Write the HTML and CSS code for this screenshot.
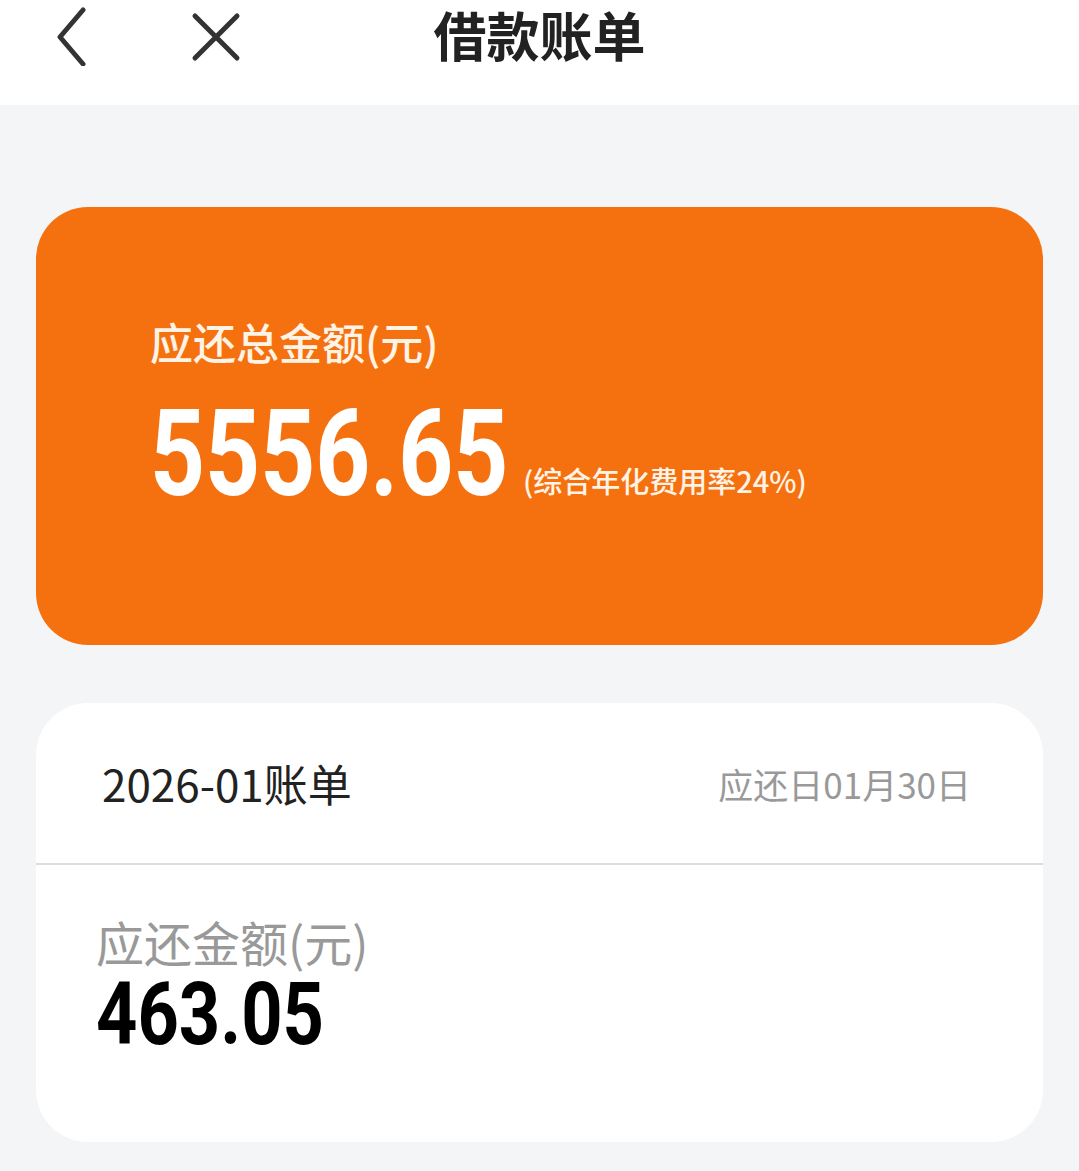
FILE: index.html
```html
<!DOCTYPE html>
<html lang="zh-CN">
<head>
  <meta charset="UTF-8">
  <title>借款账单</title>
  <link rel="stylesheet" href="styles.css">
</head>
<body>
  <div class="nav-bar">
    <div class="nav-icons">
      <svg class="nav-icon" width="40" height="60" viewBox="0 0 40 60">
        <path d="M31 4 L8 31 L31 58" fill="none" stroke="#333" stroke-width="5" stroke-linecap="round" stroke-linejoin="round"/>
      </svg>
      <svg class="nav-icon close" width="52" height="52" viewBox="0 0 52 52">
        <path d="M5 5 L47 47 M47 5 L5 47" fill="none" stroke="#333" stroke-width="5" stroke-linecap="round"/>
      </svg>
    </div>
    <div class="nav-title">借款账单</div>
  </div>

  <div class="content">
    <div class="total-card">
      <div class="total-label">应还总金额(元)</div>
      <div class="total-row">
        <span class="total-amount">5556.65</span>
        <span class="total-rate">(综合年化费用率24%)</span>
      </div>
    </div>

    <div class="bill-card">
      <div class="bill-head">
        <span class="bill-month">2026-01账单</span>
        <span class="bill-due">应还日01月30日</span>
      </div>
      <div class="bill-body">
        <div class="bill-label">应还金额(元)</div>
        <div class="bill-amount">463.05</div>
      </div>
    </div>
  </div>
</body>
</html>
```

FILE: styles.css
```css
body {
  margin: 0;
  background-color: #f4f5f7;
  font-family: "Noto Sans CJK SC", "Noto Sans", sans-serif;
  color: #222;
}
.nav-bar {
  position: relative;
  height: 105px;
  box-sizing: border-box;
  padding-top: 2px;
  background: #fff;
  display: flex;
  align-items: flex-start;
  justify-content: center;
}
.nav-icons {
  position: absolute;
  left: 52px;
  top: 6px;
  display: flex;
  align-items: center;
  gap: 98px;
}
.nav-icon {
  display: block;
}
.nav-icon.close {
  margin-top: 1px;
}
.nav-title {
  font-size: 53px;
  font-weight: 700;
  line-height: 64px;
  color: #222;
}
.content {
  padding: 102px 36px 0;
}
.total-card {
  height: 438px;
  box-sizing: border-box;
  background: #f5710f;
  border-radius: 52px;
  padding: 113px 0 0 114px;
  color: #fff;
}
.total-label {
  font-size: 43px;
  font-weight: 500;
  line-height: 1;
  color: #fff3e6;
}
.total-row {
  display: flex;
  align-items: baseline;
  margin-top: 31px;
}
.total-amount {
  display: inline-block;
  font-family: Roboto, "Liberation Sans", sans-serif;
  font-weight: 700;
  font-size: 120px;
  line-height: 1;
  transform: scaleX(0.8);
  transform-origin: left center;
  margin-right: -87px;
}
.total-rate {
  font-size: 29px;
  margin-left: 12px;
  font-weight: 500;
  color: #fff3e6;
  position: relative;
  top: -2px;
}
.bill-card {
  margin-top: 58px;
  height: 439px;
  background: #fff;
  border-radius: 52px;
  overflow: hidden;
}
.bill-head {
  height: 162px;
  box-sizing: border-box;
  border-bottom: 2px solid #ddd;
  display: flex;
  justify-content: space-between;
  align-items: center;
  padding: 0 72px 0 66px;
}
.bill-month {
  font-size: 44px;
  color: #222;
}
.bill-due {
  font-size: 35px;
  color: #999;
}
.bill-body {
  padding: 52px 0 0 60px;
}
.bill-label {
  font-size: 48px;
  line-height: 1;
  color: #999;
}
.bill-amount {
  display: inline-block;
  font-family: Roboto, "Liberation Sans", sans-serif;
  font-weight: 700;
  font-size: 88px;
  line-height: 1;
  color: #000;
  margin-top: 5px;
  transform: scaleX(0.82);
  transform-origin: left center;
}
```
